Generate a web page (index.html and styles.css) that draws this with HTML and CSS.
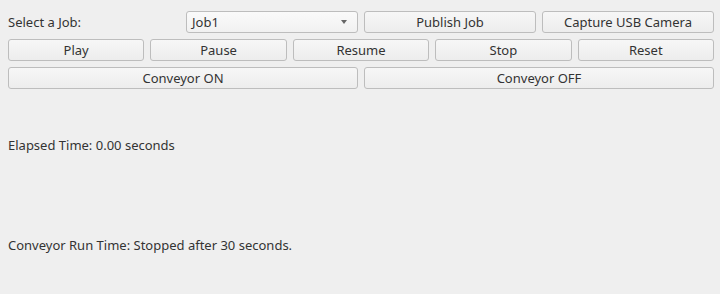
FILE: index.html
```html
<!DOCTYPE html>
<html>
<head>
<meta charset="utf-8">
<link rel="stylesheet" href="styles.css">
</head>
<body>
<div class="app">
  <div class="row row4">
    <div class="label">Select a Job:</div>
    <div class="combo"><span>Job1</span><span class="arrow"></span></div>
    <button class="btn">Publish Job</button>
    <button class="btn">Capture USB Camera</button>
  </div>
  <div class="row row5">
    <button class="btn">Play</button>
    <button class="btn">Pause</button>
    <button class="btn">Resume</button>
    <button class="btn">Stop</button>
    <button class="btn">Reset</button>
  </div>
  <div class="row row2">
    <button class="btn">Conveyor ON</button>
    <button class="btn">Conveyor OFF</button>
  </div>
  <div class="status elapsed">Elapsed Time: 0.00 seconds</div>
  <div class="status runtime">Conveyor Run Time: Stopped after 30 seconds.</div>
</div>
</body>
</html>
```
FILE: styles.css
```css
html, body {
  margin: 0;
  padding: 0;
  background: #efefef;
}
body {
  font-family: "Noto Sans", "DejaVu Sans", sans-serif;
  font-size: 13px;
  color: #333333;
}
.app {
  padding: 11px 6px 0 8px;
  display: flex;
  flex-direction: column;
  gap: 6px;
}
.row {
  display: grid;
  gap: 6px;
  height: 22px;
}
.row4 { grid-template-columns: repeat(4, 1fr); }
.row5 { grid-template-columns: repeat(5, 1fr); }
.row2 { grid-template-columns: repeat(2, 1fr); }
.label {
  line-height: 22px;
}
.btn, .combo {
  box-sizing: border-box;
  height: 22px;
  border: 1px solid #bdbdbd;
  border-radius: 3px;
  background: linear-gradient(#f7f7f7, #ededed);
  font-family: inherit;
  font-size: 13px;
  color: #333333;
  padding: 0;
  margin: 0;
  line-height: 20px;
  text-align: center;
}
.combo {
  display: flex;
  align-items: center;
  justify-content: space-between;
  padding: 0 10px 0 5px;
  background: linear-gradient(#fafafa, #f1f1f1);
}
.arrow {
  width: 0;
  height: 0;
  border-left: 3.5px solid transparent;
  border-right: 3.5px solid transparent;
  border-top: 4px solid #666666;
}
.status {
  height: 22px;
  line-height: 22px;
}
.elapsed { margin-top: 39px; }
.runtime { margin-top: 72px; }
```
